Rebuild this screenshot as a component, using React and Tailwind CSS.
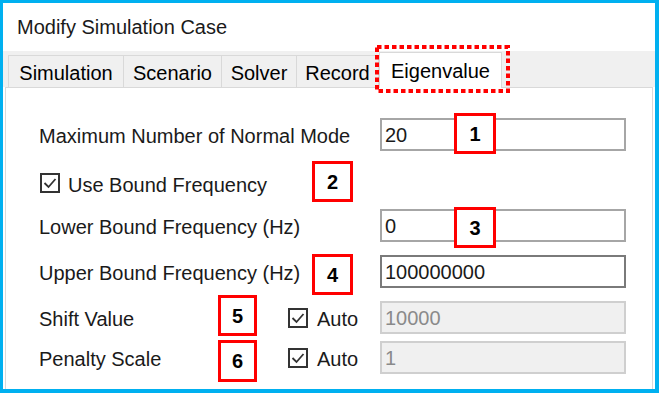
import React from "react";

const FONT = { fontFamily: '"Liberation Sans", Arial, sans-serif' };

const CheckBox = () => (
  <svg width="20" height="20" viewBox="0 0 20 20" className="shrink-0">
    <rect x="1" y="1" width="18" height="18" fill="#fff" stroke="#333" strokeWidth="2" />
    <polyline points="4.5,10 8.5,14 15.5,6" fill="none" stroke="#333" strokeWidth="1.8" />
  </svg>
);

const TextBox = ({ value, disabled, dark }) => (
  <div
    className={`h-[33px] w-[246px] border-2 flex items-center pl-[3px] text-[20px] ${
      disabled
        ? "bg-[#f0f0f0] border-[#cfcfcf] text-[#8a8a8a]"
        : dark
        ? "bg-white border-[#7a7a7a] text-[#1a1a1a]"
        : "bg-white border-[#a6a6a6] text-[#1a1a1a]"
    }`}
  >
    {value}
  </div>
);

const Badge = ({ n, className }) => (
  <div
    className={`absolute border-[3px] border-[#ff0000] bg-white flex items-center justify-center text-[20px] font-bold text-black ${className}`}
  >
    {n}
  </div>
);

const tabs = [
  { label: "Simulation", w: "w-[115px]" },
  { label: "Scenario", w: "w-[98px]" },
  { label: "Solver", w: "w-[75px]" },
  { label: "Record", w: "w-[83px]" },
];

export default function App() {
  return (
    <div
      style={FONT}
      className="relative w-[659px] h-[393px] bg-white border-[#00b0f0] border-t-[3px] border-l-[3px] border-r-4 border-b-4 flex flex-col overflow-hidden text-[#1a1a1a]"
    >
      {/* title */}
      <div className="h-[48px] shrink-0 flex items-center pl-[14px] text-[20px]">
        Modify Simulation Case
      </div>

      {/* tab strip */}
      <div className="h-[36px] shrink-0 bg-[#f0f0f0] flex items-end pl-[5px]">
        {tabs.map((t, i) => (
          <div
            key={t.label}
            className={`${t.w} h-[32px] pt-[3px] border-t border-l border-[#d9d9d9] flex items-center justify-center text-[20px] text-black ${
              i === tabs.length - 1 ? "border-r" : ""
            }`}
          >
            {t.label}
          </div>
        ))}
        <div className="relative z-10 w-[123px] h-[36px] mb-[-1px] bg-white border border-b-0 border-[#d9d9d9] flex items-center justify-center text-[20px] text-black">
          Eigenvalue
        </div>
      </div>

      {/* panel */}
      <div className="flex-1 mx-[2px] bg-white border border-b-0 border-[#d9d9d9] pl-[33px] pt-[30px] text-[20px]">
        <div className="grid grid-cols-[249px_92px_246px] items-center h-[33px]">
          <div className="col-span-2 pt-[3px]">Maximum Number of Normal Mode</div>
          <TextBox value="20" />
        </div>

        <div className="mt-[22px] h-[20px] flex items-center gap-[8px] ml-[1px]">
          <CheckBox />
          <span className="pt-[3px]">Use Bound Frequency</span>
        </div>

        <div className="mt-[16px] grid grid-cols-[249px_92px_246px] items-center h-[33px]">
          <div className="col-span-2 pt-[2px]">Lower Bound Frequency (Hz)</div>
          <TextBox value="0" />
        </div>

        <div className="mt-[13px] grid grid-cols-[249px_92px_246px] items-center h-[33px]">
          <div className="col-span-2 pt-[2px]">Upper Bound Frequency (Hz)</div>
          <TextBox value="100000000" dark />
        </div>

        <div className="mt-[13px] grid grid-cols-[249px_92px_246px] items-center h-[33px]">
          <div className="pt-[2px]">Shift Value</div>
          <div className="flex items-center gap-[9px]">
            <CheckBox />
            <span className="pt-[2px]">Auto</span>
          </div>
          <TextBox value="10000" disabled />
        </div>

        <div className="mt-[7px] grid grid-cols-[249px_92px_246px] items-center h-[33px]">
          <div className="pt-[2px]">Penalty Scale</div>
          <div className="flex items-center gap-[9px]">
            <CheckBox />
            <span className="pt-[2px]">Auto</span>
          </div>
          <TextBox value="1" disabled />
        </div>
      </div>

      {/* annotations */}
      <svg className="absolute left-[372px] top-[42px]" width="135" height="48" viewBox="0 0 135 48">
        <rect x="2" y="2" width="131" height="44" fill="none" stroke="#ff0000" strokeWidth="4" strokeDasharray="4.5 3" />
      </svg>
      <Badge n="1" className="left-[451px] top-[110px] w-[42px] h-[41px]" />
      <Badge n="2" className="left-[309px] top-[158px] w-[41px] h-[41px]" />
      <Badge n="3" className="left-[451px] top-[204px] w-[42px] h-[41px]" />
      <Badge n="4" className="left-[309px] top-[251px] w-[41px] h-[41px]" />
      <Badge n="5" className="left-[215px] top-[292px] w-[39px] h-[41px]" />
      <Badge n="6" className="left-[215px] top-[337px] w-[39px] h-[42px]" />
    </div>
  );
}
